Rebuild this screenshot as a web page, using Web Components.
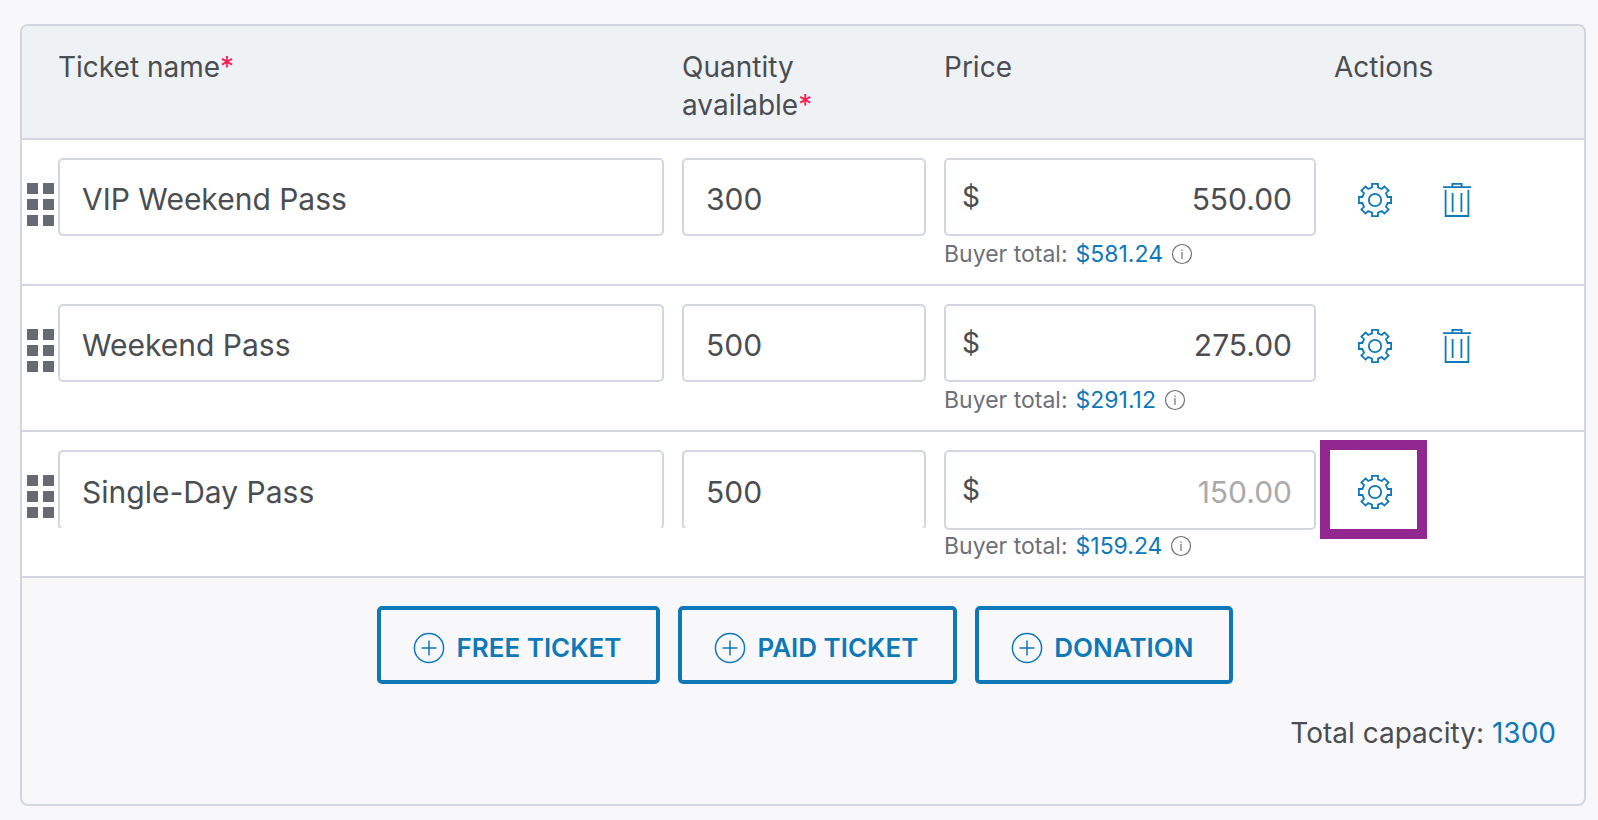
<!DOCTYPE html>
<html lang="en">
<head>
<meta charset="utf-8">
<title>Tickets</title>
<style>
    body {
        margin: 0;
        padding: 24px 12px 14px 20px;
        background: #f8f8fa;
        color: #4a4d51;
        font: 28px/38px Inter, "Liberation Sans", sans-serif;
        --line: #d2d6e0;
        --blue: #0f78b8;
        --muted: #6d7079;
        --mark: #92278f;
    }
</style>
</head>
<body>
<ticket-card>
    <ticket-table></ticket-table>
    <add-ticket slot="actions">FREE TICKET</add-ticket>
    <add-ticket slot="actions">PAID TICKET</add-ticket>
    <add-ticket slot="actions">DONATION</add-ticket>
    <total-capacity slot="total">1300</total-capacity>
</ticket-card>

<script>
const TICKETS = [
    { name: "VIP Weekend Pass", quantity: 300, price: "550.00", total: "$581.24" },
    { name: "Weekend Pass", quantity: 500, price: "275.00", total: "$291.12" },
    { name: "Single-Day Pass", quantity: 500, price: "150.00", total: "$159.24", locked: true },
];

const ICONS = {
    // one tooth every 45 degrees, then the hub
    gear: `<svg width="34" height="34" viewBox="-17 -17 34 34" stroke-width="1.8">
        <path d="M-3-16.1H3V-12.6L6.8-11L9.4-13.6L13.6-9.4L11-6.8L12.6-3H16.1V3H12.6L11 6.8L13.6 9.4L9.4 13.6L6.8 11L3 12.6V16.1H-3V12.6L-6.8 11L-9.4 13.6L-13.6 9.4L-11 6.8L-12.6 3H-16.1V-3H-12.6L-11-6.8L-13.6-9.4L-9.4-13.6L-6.8-11L-3-12.6Z"/>
        <circle r="6.2"/></svg>`,
    trash: `<svg width="34" height="34" viewBox="-17 -17 34 34" stroke-width="1.8">
        <path d="M-14-12.9H14M-4.6-12.9V-16.1H4.6V-12.9M-11.4-10.3V16H11.4V-10.3M-4.4-7V12M4.4-7V12"/></svg>`,
    plus: `<svg width="32" height="32" viewBox="-16 -16 32 32" stroke-width="1.5">
        <circle r="14.6"/><path d="M-7.5 0H7.5M0-7.5V7.5"/></svg>`,
    info: `<svg width="22" height="22" viewBox="-11 -11 22 22" stroke-width="1.2">
        <circle r="9.5"/><path d="M0-2V5M0-4.5V-3"/></svg>`,
    grip: `<svg width="27" height="43" viewBox="0 0 27 43">
        <path fill="#666a73" d="M0 0h11v11H0zM16 0h11v11H16zM0 16h11v11H0zM16 16h11v11H16zM0 32h11v11H0zM16 32h11v11H16z" stroke="none"/></svg>`,
};

class UiIcon extends HTMLElement {
    connectedCallback() {
        this.inner = this.attachShadow({ mode: "open" });
        this.inner.innerHTML = `
            <style>
                :host { display: inline-flex; }
                svg { display: block; fill: none; stroke: currentColor; }
            </style>
            ${ICONS[this.getAttribute("name")]}
        `;
    }
}

class TicketCard extends HTMLElement {
    connectedCallback() {
        this.inner = this.attachShadow({ mode: "open" });
        this.inner.innerHTML = `
            <style>
                :host {
                    display: block;
                    border: 2px solid var(--line);
                    border-radius: 8px;
                    overflow: hidden;
                }
                footer { padding: 28px 28px 52px 32px; }
                .actions {
                    display: flex;
                    flex-wrap: wrap;
                    justify-content: center;
                    gap: 18px;
                    margin-bottom: 30px;
                }
            </style>
            <slot></slot>
            <footer>
                <div class="actions"><slot name="actions"></slot></div>
                <slot name="total"></slot>
            </footer>
        `;
    }
}

class TextField extends HTMLElement {
    connectedCallback() {
        this.inner = this.attachShadow({ mode: "open" });
        this.inner.innerHTML = `
            <style>
                :host { display: block; height: 78px; }
                :host([clipped]) { overflow: hidden; }
                :host([clipped]) input { height: 80px; }
                input {
                    display: block;
                    box-sizing: border-box;
                    width: 100%;
                    height: 78px;
                    margin: 0;
                    padding: 4px 22px 0;
                    border: 2px solid var(--line);
                    border-radius: 5px;
                    background: #fff;
                    color: inherit;
                    font: inherit;
                    font-size: 30px;
                }
            </style>
            <input type="text" aria-label="${this.getAttribute("label")}" value="${this.getAttribute("value")}">
        `;
    }
}

class PriceField extends HTMLElement {
    connectedCallback() {
        let locked = this.hasAttribute("locked");
        this.inner = this.attachShadow({ mode: "open" });
        this.inner.innerHTML = `
            <style>
                :host { display: block; height: 78px; }
                label {
                    display: flex;
                    align-items: center;
                    box-sizing: border-box;
                    height: 78px;
                    padding: 0 22px 0 16px;
                    border: 2px solid var(--line);
                    border-radius: 5px;
                    background: #fff;
                }
                :host([locked]) label { height: 80px; }
                input {
                    flex: 1;
                    min-width: 0;
                    margin: 0;
                    padding: 4px 0 0;
                    border: 0;
                    background: none;
                    color: inherit;
                    font: inherit;
                    font-size: 30px;
                    text-align: right;
                }
                input:disabled { color: #aaa; }
            </style>
            <label>$<input type="text" aria-label="Price" value="${this.getAttribute("value")}" ${locked ? "disabled" : ""}></label>
        `;
    }
}

class BuyerTotal extends HTMLElement {
    connectedCallback() {
        this.inner = this.attachShadow({ mode: "open" });
        this.inner.innerHTML = `
            <style>
                :host {
                    display: flex;
                    align-items: center;
                    gap: 8px;
                    color: var(--muted);
                    font-size: 23px;
                    line-height: 36px;
                }
                a { color: var(--blue); text-decoration: none; }
            </style>
            <span>Buyer total:</span>
            <a href="#"><slot></slot></a>
            <ui-icon name="info"></ui-icon>
        `;
    }
}

class IconButton extends HTMLElement {
    connectedCallback() {
        this.inner = this.attachShadow({ mode: "open" });
        this.inner.innerHTML = `
            <style>
                :host { display: block; position: relative; }
                /* call-out frame round the button */
                :host([marked])::after {
                    content: "";
                    position: absolute;
                    inset: -10px -11px -11px -14px;
                    border: 10px solid var(--mark);
                    pointer-events: none;
                }
                button {
                    display: flex;
                    align-items: center;
                    justify-content: center;
                    width: 82px;
                    height: 78px;
                    margin: 0;
                    padding: 6px 0 0;
                    border: 0;
                    background: none;
                    color: var(--blue);
                    cursor: pointer;
                }
            </style>
            <button type="button" aria-label="${this.getAttribute("label")}">
                <ui-icon name="${this.getAttribute("icon")}"></ui-icon>
            </button>
        `;
    }
}

class TicketTable extends HTMLElement {
    connectedCallback() {
        this.inner = this.attachShadow({ mode: "open" });
        this.inner.innerHTML = `
            <style>
                :host { display: block; }
                table {
                    width: 100%;
                    table-layout: fixed;
                    border-spacing: 0;
                }
                .grip { width: 36px; }
                .quantity { width: 262px; }
                .price { width: 390px; }
                .actions { width: 250px; }
                th, td {
                    box-sizing: border-box;
                    border-bottom: 2px solid var(--line);
                    text-align: left;
                    vertical-align: top;
                }
                th {
                    padding: 22px 60px 14px 0;
                    background: #eef2f5;
                    font-weight: 400;
                }
                td {
                    height: 146px;
                    padding: 18px 18px 0 0;
                    background: #fff;
                }
                td.handle { padding: 43px 0 0 5px; }
                td.tools { padding-right: 0; }
                .buttons { display: flex; }
                b { color: #ff1654; font-weight: 400; }
            </style>
            <table>
                <colgroup>
                    <col class="grip"><col><col class="quantity"><col class="price"><col class="actions">
                </colgroup>
                <thead>
                    <tr>
                        <th></th>
                        <th scope="col">Ticket name<b>*</b></th>
                        <th scope="col">Quantity available<b>*</b></th>
                        <th scope="col">Price</th>
                        <th scope="col">Actions</th>
                    </tr>
                </thead>
                <tbody>${TICKETS.map(ticket => this.Row(ticket)).join("")}</tbody>
            </table>
        `;
    }

    Row(ticket) {
        let clipped = ticket.locked ? "clipped" : "";
        let trash = `<icon-button icon="trash" label="Delete ticket"></icon-button>`;
        return `
            <tr>
                <td class="handle"><ui-icon name="grip"></ui-icon></td>
                <td><text-field label="Ticket name" value="${ticket.name}" ${clipped}></text-field></td>
                <td><text-field label="Quantity available" value="${ticket.quantity}" ${clipped}></text-field></td>
                <td>
                    <price-field value="${ticket.price}" ${ticket.locked ? "locked" : ""}></price-field>
                    <buyer-total>${ticket.total}</buyer-total>
                </td>
                <td class="tools">
                    <div class="buttons">
                        <icon-button icon="gear" label="Ticket settings" ${ticket.locked ? "marked" : ""}></icon-button>
                        ${ticket.locked ? "" : trash}
                    </div>
                </td>
            </tr>
        `;
    }
}

class AddTicket extends HTMLElement {
    connectedCallback() {
        this.inner = this.attachShadow({ mode: "open" });
        this.inner.innerHTML = `
            <style>
                :host { display: block; }
                button {
                    display: flex;
                    align-items: center;
                    gap: 11px;
                    height: 78px;
                    margin: 0;
                    padding: 6px 35px 0 32px;
                    border: 4px solid var(--blue);
                    border-radius: 5px;
                    background: none;
                    color: var(--blue);
                    font: inherit;
                    font-size: 26px;
                    font-weight: 600;
                    cursor: pointer;
                }
            </style>
            <button type="button"><ui-icon name="plus"></ui-icon><slot></slot></button>
        `;
    }
}

class TotalCapacity extends HTMLElement {
    connectedCallback() {
        this.inner = this.attachShadow({ mode: "open" });
        this.inner.innerHTML = `
            <style>
                :host { display: block; text-align: right; }
                span { color: var(--blue); }
            </style>
            Total capacity: <span><slot></slot></span>
        `;
    }
}

customElements.define("ui-icon", UiIcon);
customElements.define("ticket-card", TicketCard);
customElements.define("text-field", TextField);
customElements.define("price-field", PriceField);
customElements.define("buyer-total", BuyerTotal);
customElements.define("icon-button", IconButton);
customElements.define("ticket-table", TicketTable);
customElements.define("add-ticket", AddTicket);
customElements.define("total-capacity", TotalCapacity);
</script>
</body>
</html>
